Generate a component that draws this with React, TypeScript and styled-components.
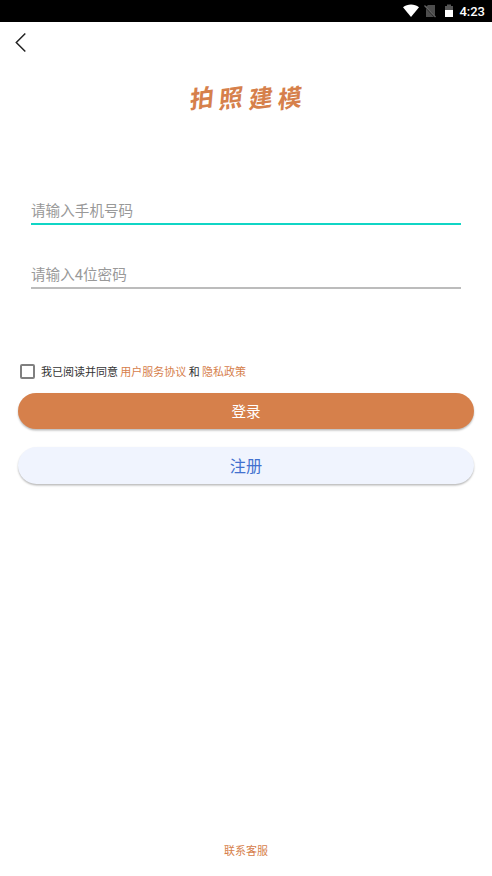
import React, { useState } from 'react';
import styled, { createGlobalStyle } from 'styled-components';

const GlobalStyle = createGlobalStyle`
  * { box-sizing: border-box; }
  body {
    margin: 0;
    background: #fff;
    font-family: Roboto, 'Noto Sans CJK SC', sans-serif;
  }
`;

const Screen = styled.main`
  display: flex;
  flex-direction: column;
  height: 876px;
  max-width: 492px;
  background: #fff;
`;

const StatusBar = styled.header`
  display: flex;
  align-items: center;
  justify-content: flex-end;
  flex: none;
  height: 22px;
  padding-right: 7px;
  background: #000;
  color: #fff;
`;

const Clock = styled.time`
  margin-left: 5px;
  padding-top: 1px;
  font-size: 13px;
  font-weight: 500;
  line-height: 21px;
`;

const NavBar = styled.nav`
  display: flex;
  flex: none;
  height: 40px;
`;

const BackButton = styled.button`
  display: flex;
  width: 40px;
  height: 40px;
  padding: 0;
  border: 0;
  background: none;
`;

const Brand = styled.h1`
  display: flex;
  justify-content: center;
  gap: 5.3px;
  flex: none;
  height: 36px;
  margin: 17px 0 0;
  color: #d6804b;
  font-family: 'Noto Sans CJK SC', sans-serif;
  font-size: 24px;
  font-weight: 700;
  line-height: 36px;
`;

const BrandGlyph = styled.span`
  transform: skew(-5deg, -8deg);
`;

const Fields = styled.section`
  display: flex;
  flex-direction: column;
  gap: 34px;
  flex: none;
  margin: 80px 31px 0;
`;

const Field = styled.input<{ $active?: boolean }>`
  display: block;
  width: 100%;
  height: 30px;
  padding: 4px 0 0;
  border: 0;
  border-bottom: 2px solid ${(p) => (p.$active ? '#10d5c5' : '#bcbcbc')};
  border-radius: 0;
  outline: 0;
  background: transparent;
  color: #333;
  font-family: inherit;
  font-size: 14.6px;
  line-height: 24px;

  &::placeholder {
    color: #999;
    opacity: 1;
  }
`;

const Consent = styled.label`
  display: flex;
  align-items: center;
  flex: none;
  height: 22px;
  margin: 71px 0 0 20px;
  color: #333;
  font-size: 11px;
  line-height: 22px;
  white-space: pre;
`;

const ConsentText = styled.span`
  padding-top: 3px;
  word-spacing: -0.4px;
`;

const Checkbox = styled.input`
  appearance: none;
  flex: none;
  width: 15px;
  height: 15px;
  margin: 0 6px 0 0;
  border: 2px solid #808080;
  border-radius: 2px;
  background: #fff;

  &:checked {
    background: #d6804b;
  }
`;

const Policy = styled.span`
  color: #d6804b;
`;

const Actions = styled.section`
  display: flex;
  flex-direction: column;
  gap: 18px;
  flex: none;
  margin: 11px 18px 0;
`;

const Button = styled.button<{ $secondary?: boolean }>`
  height: ${(p) => (p.$secondary ? 37 : 36)}px;
  padding: 2px 0 0;
  border: 0;
  border-radius: 19px;
  background: ${(p) => (p.$secondary ? '#f0f4fe' : '#d6804b')};
  color: ${(p) => (p.$secondary ? '#4271cf' : '#fff')};
  box-shadow: 0 1.5px 2px rgba(0, 0, 0, 0.27);
  font-family: inherit;
  font-size: ${(p) => (p.$secondary ? 16.2 : 14.6)}px;
  line-height: 34px;
`;

const Support = styled.footer`
  margin: auto 0 14px;
  color: #d6804b;
  font-size: 11px;
  line-height: 20px;
  text-align: center;
`;

const StatusIcons = () => (
  <svg width="51" height="16" viewBox="0 0 51 16">
    <path d="M0 4.3C4.5 .7 11.5 .7 16 4.3L8 14Z" fill="#fff" />
    <path d="M25 2h7v10.5L23 3.8ZM23 5.5 31 14h-8Z" fill="#4d4d4d" />
    <path d="m21.5 2.5 11 11.5" stroke="#666" strokeWidth="1.2" />
    <path d="M42 3h2V1.5h4V3h2v4h-8Z" fill="#555" />
    <path d="M42 7h8v7h-8Z" fill="#fff" />
  </svg>
);

export default function App() {
  const [agreed, setAgreed] = useState(false);
  return (
    <>
      <GlobalStyle />
      <Screen>
        <StatusBar>
          <StatusIcons />
          <Clock>4:23</Clock>
        </StatusBar>
        <NavBar>
          <BackButton aria-label="返回">
            <svg width="40" height="40" viewBox="0 0 40 40" fill="none" stroke="#222" strokeWidth="1.5">
              <path d="m25.3 11.5-9 9 9 9" />
            </svg>
          </BackButton>
        </NavBar>
        <Brand>
          {[...'拍照建模'].map((glyph) => (
            <BrandGlyph key={glyph}>{glyph}</BrandGlyph>
          ))}
        </Brand>
        <Fields>
          <Field $active type="tel" placeholder="请输入手机号码" />
          <Field type="password" placeholder="请输入4位密码" />
        </Fields>
        <Consent>
          <Checkbox type="checkbox" checked={agreed} onChange={(e) => setAgreed(e.target.checked)} />
          <ConsentText>我已阅读并同意 <Policy>用户服务协议</Policy> 和 <Policy>隐私政策</Policy></ConsentText>
        </Consent>
        <Actions>
          <Button>登录</Button>
          <Button $secondary>注册</Button>
        </Actions>
        <Support>联系客服</Support>
      </Screen>
    </>
  );
}
